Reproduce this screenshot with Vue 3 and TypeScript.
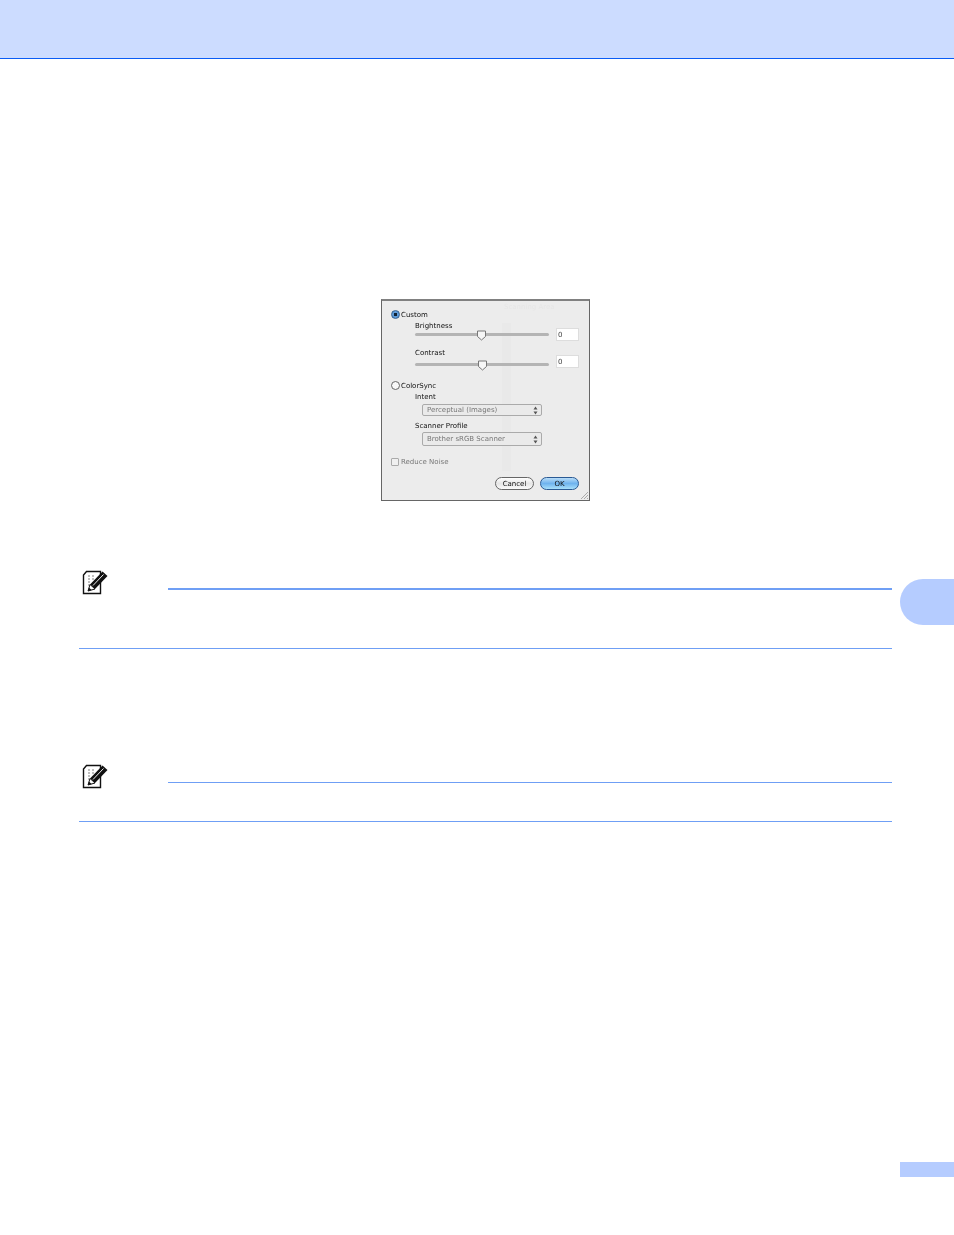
<template>
  <div class="page">
    <header class="top-band"></header>

    <section class="dialog">
      <!-- faint window showing through the sheet -->
      <div class="ghost">
        <span class="ghost-title">Scanning Area</span>
        <span class="ghost-band"></span>
      </div>

      <label class="choice"><span class="radio on"></span>Custom</label>
      <div v-for="s in sliders" :key="s.label" class="slider-row" :class="s.cls">
        <div class="slider-col">
          <div class="field-label">{{ s.label }}</div>
          <div class="track-box">
            <div class="track"></div>
            <svg class="thumb" :style="{ left: s.pos + 'px' }" width="11" height="11" viewBox="0 0 11 11">
              <path d="M1.500 1h8v5.500L5.500 10 1.500 6.500z" fill="#f6f6f6" stroke="#777" stroke-width="1" />
            </svg>
          </div>
        </div>
        <div class="num">0</div>
      </div>

      <label class="choice sync"><span class="radio"></span>ColorSync</label>
      <div class="field-label indent intent">Intent</div>
      <div class="select"><span>Perceptual (Images)</span><svg width="5" height="9" viewBox="0 0 5 9"><path d="M2.500 0.500 4.500 3.500H.5zM2.500 8.500 .5 5.500h4z" fill="#555" /></svg></div>
      <div class="field-label indent profile">Scanner Profile</div>
      <div class="select tall"><span>Brother sRGB Scanner</span><svg width="5" height="9" viewBox="0 0 5 9"><path d="M2.500 0.500 4.500 3.500H.5zM2.500 8.500 .5 5.500h4z" fill="#555" /></svg></div>

      <label class="check"><span class="box"></span>Reduce Noise</label>

      <div class="actions">
        <button class="btn">Cancel</button>
        <button class="btn ok">OK</button>
      </div>
      <svg class="grip" width="10" height="10" viewBox="0 0 10 10">
        <path d="M9 2 2 9M9 5 5 9M9 8 8 9" stroke="#aaa" stroke-width="1" fill="none" />
      </svg>
    </section>

    <section v-for="n in notes" :key="n.cls" class="note" :class="n.cls">
      <svg class="note-icon" width="26" height="25" viewBox="0 0 26 25">
        <path d="M4.500 1.500H18.500V23.500H1.500V5z" fill="#fff" stroke="#111" stroke-width="1.400" />
        <path d="M6 6h2M10 6h2M6 9h2M10 9h2M6 12h2M6 15h2" stroke="#aaa" stroke-width="1.400" />
        <path d="M20.500 1.500 25.500 6 13 19 8 14.500z" fill="#111" />
        <path d="M21.500 4.500 11 15.500" stroke="#eee" stroke-width="1" />
        <path d="M8 14.500 6 21 13 19z" fill="#fff" stroke="#111" stroke-width="1" />
        <path d="M6 21 7 17.500 9.500 20z" fill="#111" />
      </svg>
      <div class="note-rule"></div>
    </section>

    <div class="chapter-tab"></div>
    <div class="page-tab"></div>
  </div>
</template>

<script setup lang="ts">
const sliders = [
  { label: 'Brightness', pos: 61, cls: 'first' },
  { label: 'Contrast', pos: 62, cls: 'second' },
]

const notes = [{ cls: 'note-a' }, { cls: 'note-b' }]
</script>

<style>
html,
body {
  background: #fff;
}
</style>

<style scoped>
.page {
  position: relative;
  height: 1235px;
  overflow: hidden;
  background: #fff;
  font-family: "DejaVu Sans", sans-serif;
}

.top-band {
  height: 58px;
  background: #ccdcff;
  border-bottom: 1px solid #0a5cf5;
}

.dialog {
  position: relative;
  box-sizing: border-box;
  width: 209px;
  height: 202px;
  margin: 240px 0 0 381px;
  padding-top: 9px;
  background: #ececec;
  border: 1px solid #666;
  border-top: 2px solid #808080;
  font-size: 7px;
  color: #111;
  filter: blur(0.3px);
}

.ghost {
  position: absolute;
  inset: 0;
  pointer-events: none;
}
.ghost-title {
  position: absolute;
  left: 122px;
  top: 2px;
  color: #e6e6e6;
  font-size: 7px;
}
.ghost-band {
  position: absolute;
  left: 120px;
  top: 22px;
  width: 9px;
  height: 148px;
  background: #e9e9e9;
}

.choice,
.check {
  position: relative;
  display: flex;
  align-items: center;
  height: 10px;
  padding-left: 9px;
  gap: 1px;
}
.check {
  gap: 2px;
}
.sync {
  margin-top: 12px;
}

.radio {
  box-sizing: border-box;
  width: 9px;
  height: 9px;
  margin-top: -1px;
  border: 1px solid #666;
  border-radius: 50%;
  background: #f8f8f8;
}
.radio.on {
  background: radial-gradient(circle, #123 0 1.5px, #5d9ad8 2px);
  border-color: #34608f;
}

.slider-row {
  position: relative;
  display: flex;
  height: 21px;
  padding-left: 33px;
  margin-top: 1px;
}
.slider-row.second {
  margin-top: 6px;
}
.slider-col {
  width: 134px;
}
.field-label {
  position: relative;
  height: 10px;
  line-height: 10px;
  font-weight: 500;
}
.track-box {
  position: relative;
  height: 11px;
}
.track {
  position: absolute;
  left: 0;
  right: 0;
  top: 2px;
  height: 3px;
  border-radius: 2px;
  background: #b4b4b4;
}
.second .track {
  top: 5px;
}
.thumb {
  position: absolute;
  top: -1px;
}
.second .thumb {
  top: 2px;
}
.num {
  box-sizing: border-box;
  align-self: flex-end;
  width: 23px;
  height: 13px;
  margin: 0 0 1px 7px;
  padding-left: 1px;
  line-height: 12px;
  background: #fff;
  border: 1px solid #ddd;
  color: #444;
}

.indent {
  margin-left: 33px;
}
.intent {
  margin-top: 1px;
}
.profile {
  margin-top: 5px;
}

.select {
  position: relative;
  box-sizing: border-box;
  display: flex;
  align-items: center;
  justify-content: space-between;
  width: 120px;
  height: 12px;
  margin: 2px 0 0 40px;
  padding: 0 3px 0 4px;
  background: #eaeaea;
  border: 1px solid #aaa;
  border-radius: 2px;
  color: #777;
}
.select.tall {
  height: 14px;
  margin-top: 1px;
}

.check {
  margin-top: 11px;
  color: #777;
}
.box {
  box-sizing: border-box;
  width: 8px;
  height: 8px;
  background: #f0f0f0;
  border: 1px solid #aaa;
  border-radius: 1px;
}

.actions {
  position: relative;
  display: flex;
  justify-content: flex-end;
  gap: 6px;
  margin-top: 10px;
  padding-right: 10px;
}
.btn {
  box-sizing: border-box;
  width: 39px;
  height: 13px;
  padding: 0;
  font: inherit;
  color: #111;
  background: linear-gradient(#fff, #e6e6e6 50%, #fafafa);
  border: 1px solid #666;
  border-radius: 7px;
}
.btn.ok {
  background: linear-gradient(#b8dcf8, #6fb3ee 50%, #a9e0fb);
  border-color: #2a5a94;
}

.grip {
  position: absolute;
  right: 0;
  bottom: 0;
}

.note {
  position: relative;
  display: flow-root;
  box-sizing: border-box;
  width: 813px;
  margin-left: 79px;
  border-bottom: 1px solid #6f9ff5;
}
.note-a {
  height: 79px;
  margin-top: 69px;
}
.note-b {
  height: 58px;
  margin-top: 115px;
}
.note-icon {
  position: absolute;
  left: 3px;
  top: 0;
}
.note-rule {
  margin: 18px 0 0 89px;
  background: #6f9ff5;
}
.note-a .note-rule {
  height: 2px;
}
.note-b .note-rule {
  height: 1px;
}

.chapter-tab {
  position: absolute;
  right: 0;
  top: 579px;
  width: 54px;
  height: 46px;
  background: #b5ccff;
  border-radius: 23px 0 0 23px;
}
.page-tab {
  position: absolute;
  right: 0;
  top: 1162px;
  width: 54px;
  height: 15px;
  background: #b5ccff;
}
</style>
